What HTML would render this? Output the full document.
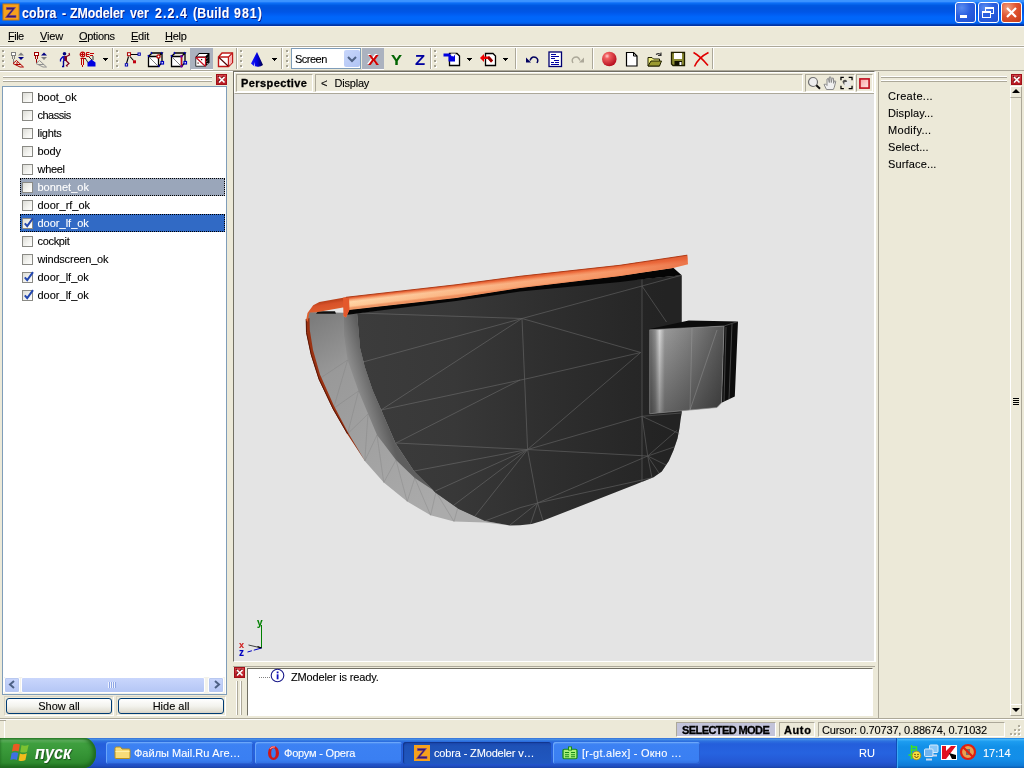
<!DOCTYPE html>
<html lang="ru"><head><meta charset="utf-8"><title>cobra - ZModeler ver 2.2.4 (Build 981)</title>
<style>
*{box-sizing:border-box}
html,body{margin:0;padding:0}
body{width:1024px;height:768px;overflow:hidden;position:relative;background:#ece9d8;font-family:"Liberation Sans","DejaVu Sans",sans-serif;font-size:11px;line-height:13px;color:#000;cursor:default;-webkit-text-stroke:.1px currentColor}
.a{position:absolute}
.t{position:absolute;white-space:nowrap}
svg{position:absolute;overflow:visible}
u{text-decoration:underline;text-underline-offset:1px}
#tb,#mb,#tool,#lp,#vp,#rp,#msg,#sb,#task{will-change:transform}
/* title bar */
#tb{left:0;top:0;width:1024px;height:26px;background:linear-gradient(to bottom,#3d95ff 0,#3a92ff 1.500px,#1c7afa 2.500px,#0a6cf2 3.500px,#0059e2 5.500px,#0054de 8px,#0056e6 12px,#005cf0 14px,#0066fa 17px,#0066f8 22px,#005ae4 23.500px,#0040b8 24.500px,#002e9a 26px)}
#tb .cap{position:absolute;left:0;top:5px;font:bold 14px/17px "Liberation Sans",sans-serif;color:#fff;text-shadow:1px 1px 0 #0a1883}
#tb .w{position:absolute;top:0;white-space:nowrap;transform-origin:0 0;transform:scaleX(.885)}
.cb{position:absolute;top:2px;width:21px;height:21px;border:1px solid #fff;border-radius:3px;background:radial-gradient(circle at 30% 25%,#5a8cf0 0%,#2a5fe0 45%,#1f4fd0 100%)}
.cb.x{background:radial-gradient(circle at 30% 25%,#f0a080 0%,#e0532f 45%,#c43a18 100%)}
/* menubar */
#mb{left:0;top:26px;width:1024px;height:20px;background:#ece9d8;border-top:1px solid #f6f6f4}
#mb .t{top:3px}
/* generic lines */
.hl{position:absolute;height:1px;background:#aca899}
.hd{position:absolute;height:1px;background:#716f64}
.wl{position:absolute;height:1px;background:#fff}
.ll{position:absolute;height:1px;background:#f8f7f1}
.vl{position:absolute;width:1px;background:#aca899}
.vd{position:absolute;width:1px;background:#716f64}
.vw{position:absolute;width:1px;background:#fff}
/* toolbar */
.grip{position:absolute;top:4px;width:3px;height:18px;background:linear-gradient(#a5a293,#a5a293) 0 0/2px 2px no-repeat,linear-gradient(#a5a293,#a5a293) 0 5px/2px 2px no-repeat,linear-gradient(#a5a293,#a5a293) 0 10px/2px 2px no-repeat,linear-gradient(#a5a293,#a5a293) 0 15px/2px 2px no-repeat,linear-gradient(#fff,#fff) 1px 1px/2px 2px no-repeat,linear-gradient(#fff,#fff) 1px 6px/2px 2px no-repeat,linear-gradient(#fff,#fff) 1px 11px/2px 2px no-repeat,linear-gradient(#fff,#fff) 1px 16px/2px 2px no-repeat}
.sep{position:absolute;top:2px;width:2px;height:21px;border-left:1px solid #aca899;border-right:1px solid #fff}
.dd{position:absolute;top:12px;width:5px;height:3px;background:linear-gradient(#000,#000) 0 0/5px 1px no-repeat,linear-gradient(#000,#000) 1px 1px/3px 1px no-repeat,linear-gradient(#000,#000) 2px 2px/1px 1px no-repeat}
.pressed{position:absolute;top:2px;height:22px;background:#abb2bf}
/* list */
.row{position:absolute;left:20px;width:205px;height:18px}
.row .cbx{position:absolute;left:2px;top:4px;width:11px;height:11px;border:1px solid #8a8a85;background:linear-gradient(135deg,#dcdcd7 0%,#f4f4f0 60%,#fff 100%)}
.row .lbl{position:absolute;left:17.500px;top:3px;white-space:nowrap}
.row.sel{background:#316ac5;color:#fff;outline:1px dotted #000;outline-offset:-1px}
.row.gsel{background:#9aa6ba;color:#fff;outline:1px dotted #000;outline-offset:-1px}
.close{position:absolute;width:11px;height:11px;background:linear-gradient(to bottom,#d8444c,#b81820);border:1px solid #a01018}
.btn{position:absolute;height:16px;border:1px solid #003c74;border-radius:3px;background:linear-gradient(to bottom,#fff 0%,#f3f3ee 50%,#e3e1d6 85%,#d6d0c5 100%);text-align:center;line-height:14px}
.sbtn{position:absolute;width:16px;height:16px;border:1px solid #fff;border-radius:2px;background:linear-gradient(to bottom,#c9d6fc,#b4c6f5);box-shadow:0 0 0 1px #b8c8f0 inset}
/* status */
.pane{position:absolute;top:3px;height:15px;border:1px solid;border-color:#aca899 #fff #fff #aca899;line-height:15px;white-space:nowrap;overflow:hidden}
/* taskbar */
#task{left:0;top:738px;width:1024px;height:30px;background:linear-gradient(to bottom,#3168d5 0%,#4993e6 4%,#2d71e0 10%,#245edb 20%,#2663e0 50%,#2458d4 80%,#1f4ec2 93%,#1941a5 100%)}
.tk{position:absolute;top:4px;height:22px;border-radius:3px;background:linear-gradient(to bottom,#5c9af6 0%,#3c81f3 12%,#3a7ff2 80%,#306de0 100%);color:#fff;box-shadow:inset 1px 1px 0 #6aa6fa,inset -1px -1px 0 #2a5fd0}
.tk.act{background:linear-gradient(to bottom,#1a46ad 0%,#1e52b7 20%,#2057c0 100%);box-shadow:inset 1px 1px 1px #12358c}
.tk .t{top:5px;color:#fff}
</style></head>
<body>
<!-- TITLE BAR -->
<div id="tb" class="a">
  <svg style="left:3px;top:4px" width="17" height="17" viewBox="0 0 17 17"><rect x="0" y="0" width="16" height="16" fill="#f6a11c"/><rect x="0" y="0" width="16" height="16" fill="none" stroke="#c87810" stroke-width="1"/><path d="M3.5 3.5h9l-6.5 8h7v2h-10.5l6.5-8h-5.5z" fill="#3a1a6a" stroke="#6a3a9a" stroke-width=".6"/></svg>
  <div class="cap"><span class="w" style="left:21.75px;letter-spacing:0.21px">cobra</span> <span class="w" style="left:62px;letter-spacing:0px">-</span> <span class="w" style="left:70px;letter-spacing:-0.09px">ZModeler</span> <span class="w" style="left:130px;letter-spacing:0.08px">ver</span> <span class="w" style="left:155px;letter-spacing:1.25px">2.2.4</span> <span class="w" style="left:192.5px;letter-spacing:0.26px">(Build</span> <span class="w" style="left:233.75px;letter-spacing:1.15px">981)</span></div>
  <div class="cb" style="left:955px"><div class="a" style="left:4px;top:12px;width:7px;height:3px;background:#fff"></div></div>
  <div class="cb" style="left:978px"><svg style="left:0;top:0" width="19" height="19"><rect x="6.5" y="4.5" width="8" height="6" fill="none" stroke="#fff"/><rect x="6" y="4" width="9" height="2" fill="#fff"/><rect x="3.5" y="8.5" width="8" height="6" fill="#2a5fe0" stroke="#fff"/><rect x="3" y="8" width="9" height="2" fill="#fff"/></svg></div>
  <div class="cb x" style="left:1001px"><svg style="left:0;top:0" width="19" height="19"><path d="M5 5l9 9M14 5l-9 9" stroke="#fff" stroke-width="2.2" fill="none"/></svg></div>
</div>
<!-- MENU BAR -->
<div id="mb" class="a">
  <div class="t" style="left:8px;letter-spacing:-.5px"><u>F</u>ile</div>
  <div class="t" style="left:40px;letter-spacing:-.15px"><u>V</u>iew</div>
  <div class="t" style="left:79px;letter-spacing:-.3px"><u>O</u>ptions</div>
  <div class="t" style="left:131px;letter-spacing:-.25px"><u>E</u>dit</div>
  <div class="t" style="left:165px;letter-spacing:-.25px"><u>H</u>elp</div>
</div>
<!-- TOOLBAR -->
<div class="ll" style="left:0;top:45px;width:1024px"></div>
<div class="hl" style="left:0;top:46px;width:1024px"></div>
<div class="wl" style="left:0;top:47px;width:1024px"></div>
<div id="tool" class="a" style="left:0;top:46px;width:1024px;height:26px">
  <div class="hl" style="left:0;top:24px;width:1024px"></div>
  <div class="wl" style="left:0;top:25px;width:233px"></div>
  <div class="grip" style="left:2px"></div>
  <!-- icon 1 : move tool -->
  <svg style="left:10px;top:5px" width="16" height="17" viewBox="0 0 16 17">
    <rect x="1.5" y="1.5" width="4" height="3" fill="#fff" stroke="#808080"/><path d="M2.5 5v3M4.5 5v3M3.5 8v4" stroke="#808080" fill="none"/>
    <path d="M3 12.5l3.5-3 7 6.5h-3.500zM5 13.500h6M7 11v3" stroke="#b00000" fill="none"/>
    <path d="M8 4.500h6l-3-3z" fill="#808080"/><path d="M8 6h6l-3 3z" fill="#000080"/>
  </svg>
  <!-- icon 2 -->
  <svg style="left:33px;top:5px" width="16" height="17" viewBox="0 0 16 17">
    <rect x="1.5" y="1.5" width="4" height="3" fill="#fff" stroke="#a00000"/><path d="M2.500 5v3M4.500 5v3M3.500 8v4" stroke="#a00000" fill="none"/>
    <path d="M3 12.500l3.500-3 7 6.500h-3.500zM5 13.500h6" stroke="#909090" fill="none"/>
    <path d="M8 4.500h6l-3-3z" fill="#000080"/><path d="M8 6h6l-3 3z" fill="#808080"/>
  </svg>
  <!-- icon 3 : walking man -->
  <svg style="left:59px;top:5px" width="13" height="17" viewBox="0 0 13 17">
    <circle cx="5.500" cy="2.800" r="1.800" fill="#000080"/>
    <path d="M4 5h3v5h-3z" fill="#1a1ac0"/><path d="M5.500 5h2.500v5h-2.500z" fill="#800020"/>
    <path d="M4 5.500l-2.500 3v2" stroke="#0000c0" stroke-width="1.300" fill="none"/>
    <path d="M7.500 5.500l3-1.500-.5-2" stroke="#800020" stroke-width="1.200" fill="none"/>
    <path d="M4.500 10v5.500h-1.500" stroke="#000090" stroke-width="1.400" fill="none"/>
    <path d="M7 9.500l3 3-2.500 2 1 1" stroke="#800020" stroke-width="1.200" fill="none"/>
  </svg>
  <!-- icon 4 -->
  <svg style="left:79px;top:5px" width="18" height="17" viewBox="0 0 18 17">
    <circle cx="3.500" cy="3.500" r="2.300" fill="none" stroke="#c00000" stroke-width="1.200"/><path d="M1.500 3.500h4M3.500 1.500v4" stroke="#c00000"/>
    <path d="M7.500 1.500v4M7.500 1.500h3M7.500 3.500h3M7.500 5.500h3M11 2.500h4M11 4.500h3" stroke="#c00000" fill="none"/>
    <path d="M1.500 7.500h5M2.500 8v6M4.500 8v6M3.500 14v2" stroke="#c00000" fill="none"/>
    <path d="M6 7l4 6M10 6l3 3M14 5v4" stroke="#000" fill="none" stroke-width=".8"/>
    <path d="M8.500 15.500v-4l4-3 4 3v4z" fill="#0000e0"/>
  </svg>
  <div class="dd" style="left:103px"></div>
  <div class="sep" style="left:112px"></div>
  <div class="grip" style="left:116px"></div>
  <!-- icon 5 : vertices -->
  <svg style="left:124px;top:5px" width="18" height="17" viewBox="0 0 18 17">
    <path d="M6 3.500h8M4.500 5.500l-2 7M6 5.500l3.500 4" stroke="#000" stroke-width="1.100" fill="none"/>
    <rect x="3.500" y="1.700" width="3" height="3" fill="#fff" stroke="#b01010" stroke-width="1.100"/>
    <rect x="14" y="2" width="2.300" height="2.300" fill="#fff" stroke="#0000b0" stroke-width="1"/>
    <rect x="1.300" y="12.700" width="2.300" height="2.300" fill="#fff" stroke="#0000b0" stroke-width="1"/>
    <rect x="9" y="9.300" width="3" height="3" fill="#c00010"/>
  </svg>
  <!-- icon 6 : cube edges -->
  <svg style="left:147px;top:5px" width="18" height="17" viewBox="0 0 18 17">
    <path d="M1.500 5.500h10v10h-10z" fill="#fff" stroke="#000" stroke-width="1.300"/>
    <path d="M1.500 5.500l3.500-3.500h10l-3.500 3.500M15 2v9.500l-3.500 4" fill="none" stroke="#000" stroke-width="1.300"/>
    <path d="M2.500 6.500l8 8" stroke="#606060" stroke-width=".8"/>
    <path d="M1 4l1 2M4 1l1 2M14 1l1.500 2M11 14l1.500 2" stroke="#0000c0" stroke-width="1.200"/>
    <circle cx="11.500" cy="5.500" r="1.600" fill="#fff" stroke="#c00000" stroke-width="1.300"/>
    <rect x="14" y="10.500" width="2.500" height="2.500" fill="#fff" stroke="#0000c0" stroke-width="1.200"/>
  </svg>
  <!-- icon 7 -->
  <svg style="left:170px;top:5px" width="18" height="17" viewBox="0 0 18 17">
    <path d="M1.500 5.500h10v10h-10z" fill="#fff" stroke="#000" stroke-width="1.300"/>
    <path d="M1.500 5.500l3.500-3.500h10l-3.500 3.500M15 2v9.500l-3.500 4" fill="none" stroke="#000" stroke-width="1.300"/>
    <path d="M2.500 6.500l8 8" stroke="#606060" stroke-width=".8"/>
    <path d="M1 4l1 2M4 1l1 2M14 1l1.500 2" stroke="#0000c0" stroke-width="1.200"/>
    <path d="M11.500 5.500v10" stroke="#c01020" stroke-width="1.500"/>
    <circle cx="11.500" cy="5.300" r="1.300" fill="#7000a0"/><circle cx="11.500" cy="15.300" r="1.200" fill="#7000a0"/>
    <rect x="14" y="10.500" width="2.500" height="2.500" fill="#fff" stroke="#0000c0" stroke-width="1.200"/>
  </svg>
  <!-- icon 8 pressed -->
  <div class="pressed" style="left:190px;width:23px"></div>
  <div class="wl" style="left:191px;top:23px;width:22px"></div>
  <svg style="left:194px;top:5px" width="17" height="17" viewBox="0 0 17 17">
    <path d="M1.500 6l3.500-4h10.500v9.500l-4 4h-10z" fill="#000"/>
    <path d="M5.300 3h8.500l-2.600 2.600h-8.300z" fill="#fff"/>
    <path d="M2.200 6.800h8.800v8h-8.800z" fill="#fff"/>
    <path d="M12.800 7.500l1.500-1.500M12.800 10.500l1.500-1.500M12.800 13l1.500-1.500" stroke="#fff" stroke-width="1" stroke-dasharray="1 1"/>
    <path d="M1.500 6.300h10v9.200M2 6.500l9 8.500" fill="none" stroke="#c01020" stroke-width="1.200"/>
    <rect x="7" y="8" width="1.200" height="1.200" fill="#400"/><rect x="3.500" y="11.500" width="1.200" height="1.200" fill="#400"/>
  </svg>
  <!-- icon 9 red cube -->
  <svg style="left:217px;top:5px" width="17" height="17" viewBox="0 0 17 17">
    <path d="M1.500 6l3.500-4h10.500v9.500l-4 4h-10z" fill="#fff" stroke="#c01818" stroke-width="1.400"/>
    <path d="M1.500 6h10v9.500M11.500 6l4-4" fill="none" stroke="#c01818" stroke-width="1.400"/>
    <path d="M12.500 6.500l2.500-3v8l-2.500 3z" fill="#f8b0b0"/>
    <path d="M2 6.500l9 8.500" stroke="#500" stroke-width="1.100"/>
  </svg>
  <div class="sep" style="left:236px"></div>
  <div class="grip" style="left:240px"></div>
  <!-- cone -->
  <svg style="left:250px;top:5px" width="14" height="17" viewBox="0 0 14 17">
    <defs><linearGradient id="cg" x1="0" x2="1"><stop offset="0" stop-color="#1a1aff"/><stop offset=".5" stop-color="#0000e0"/><stop offset="1" stop-color="#000040"/></linearGradient></defs>
    <path d="M7 1l6 13q-3 2.500-6.500 1.500q-3.500-.5-5.500-3z" fill="url(#cg)"/>
    <path d="M5 11l0 4.200-1-.4z" fill="#d8d8ff"/>
  </svg>
  <div class="dd" style="left:272px"></div>
  <div class="sep" style="left:281px"></div>
  <div class="grip" style="left:286px"></div>
  <!-- combo -->
  <div class="a" style="left:291px;top:2px;width:70px;height:21px;border:1px solid #7f9db9;background:#fff">
    <div class="t" style="left:3px;top:4px;letter-spacing:-.5px">Screen</div>
    <div class="a" style="left:52px;top:1px;width:16px;height:17px;border-radius:2px;background:linear-gradient(135deg,#c8d6fb,#b0c4f4);"></div>
    <svg style="left:55px;top:7px" width="10" height="7"><path d="M1 1l4 4 4-4" fill="none" stroke="#4d6185" stroke-width="2"/></svg>
  </div>
  <div class="pressed" style="left:362px;width:22px"></div>
  <div class="wl" style="left:362px;top:23px;width:22px"></div>
  <div class="t" style="left:368px;top:6px;font:bold 15px/16px 'Liberation Sans',sans-serif;color:#d00000;text-shadow:-1px -1px 0 #fff;transform-origin:0 0;transform:scaleX(1.1)">X</div>
  <div class="t" style="left:391px;top:6px;font:bold 15px/16px 'Liberation Sans',sans-serif;color:#006400;transform-origin:0 0;transform:scaleX(1.1)">Y</div>
  <div class="t" style="left:414.500px;top:6px;font:bold 15px/16px 'Liberation Sans',sans-serif;color:#0000a0;transform-origin:0 0;transform:scaleX(1.1)">Z</div>
  <div class="sep" style="left:430px"></div>
  <div class="grip" style="left:434px"></div>
  <!-- import icon -->
  <svg style="left:443px;top:6px" width="18" height="15" viewBox="0 0 18 15">
    <path d="M6.500 1.500h7.500l2.500 2.500v9.500h-10z" fill="#fff" stroke="#000" stroke-width="1.300"/>
    <path d="M0.500 1.500h6l2.500 3 3-3v8h-6.500v-5h-5z" fill="#0000e0"/>
    <path d="M7.500 1.500h5.500l-2.700 3.200z" fill="#fff"/>
  </svg>
  <div class="dd" style="left:467px"></div>
  <!-- export icon -->
  <svg style="left:479px;top:6px" width="18" height="15" viewBox="0 0 18 15">
    <path d="M6.500 1.500h7.500l2.500 2.500v9.500h-10z" fill="#fff" stroke="#000" stroke-width="1.300"/>
    <path d="M1 6l4-4v2.500h5.500l3.500 4-2 2-3-3.500h-4v3z" fill="#f00000"/>
    <path d="M9 4.500h1.500l3.500 4-2 2-3-3.500z" fill="#900000"/>
  </svg>
  <div class="dd" style="left:503px"></div>
  <div class="sep" style="left:515px"></div>
  <!-- undo -->
  <svg style="left:525px;top:8px" width="15" height="11" viewBox="0 0 15 11">
    <path d="M5 6.500q2-5 6-3q3 2 1 5.500" fill="none" stroke="#000060" stroke-width="1.500"/>
    <path d="M1 3.500l5 5h-5z" fill="#000060"/>
  </svg>
  <!-- list doc -->
  <svg style="left:548px;top:5px" width="15" height="17" viewBox="0 0 15 17">
    <rect x="1" y="1" width="12.500" height="14.500" fill="#fff" stroke="#000070" stroke-width="1.300"/>
    <path d="M3 3.500h5M3 5.500h8M3 7.500h4M6 9.500h5M3 11.500h3M7 11.500h4M3 13.500h8" stroke="#0000a0" stroke-width="1"/>
  </svg>
  <!-- redo (disabled) -->
  <svg style="left:570px;top:8px" width="15" height="11" viewBox="0 0 15 11">
    <path d="M10 6.500q-2-5-6-3q-3 2-1 5.500" fill="none" stroke="#aca899" stroke-width="1.400"/>
    <path d="M14 3.500l-5 5h5z" fill="#aca899"/>
  </svg>
  <div class="sep" style="left:592px"></div>
  <!-- red ball -->
  <svg style="left:601px;top:5px" width="17" height="17" viewBox="0 0 17 17">
    <defs><radialGradient id="rb" cx=".35" cy=".3" r=".7"><stop offset="0" stop-color="#ffd0d0"/><stop offset=".25" stop-color="#f06060"/><stop offset="1" stop-color="#b81020"/></radialGradient></defs>
    <circle cx="8.300" cy="8" r="7.300" fill="url(#rb)"/>
  </svg>
  <!-- new doc -->
  <svg style="left:625px;top:5px" width="13" height="17" viewBox="0 0 13 17">
    <path d="M1.500 1.500h7l3.500 3.500v10h-10.500z" fill="#fff" stroke="#000" stroke-width="1.200"/><path d="M8.500 1.500v3.500h3.500" fill="none" stroke="#000" stroke-width="1"/>
  </svg>
  <!-- open -->
  <svg style="left:647px;top:5px" width="16" height="17" viewBox="0 0 16 17">
    <path d="M1 6.500h4l1.500 1.500h6v7h-11.500z" fill="#f0f080" stroke="#202000" stroke-width="1"/>
    <path d="M1 15l3-5h10.500l-2 5z" fill="#9a9a30" stroke="#202000" stroke-width="1"/>
    <path d="M9 3.500q3-2 5 .5M14 1.500v3h-3" fill="none" stroke="#303030" stroke-width="1.100"/>
  </svg>
  <!-- save -->
  <svg style="left:670px;top:5px" width="16" height="17" viewBox="0 0 16 17">
    <path d="M1.500 1.500h13v13h-11.500l-1.500-1.500z" fill="#8a8a30" stroke="#202000" stroke-width="1.300"/>
    <rect x="4" y="2" width="8" height="6" fill="#fff"/><rect x="4.500" y="10" width="7.500" height="4.500" fill="#101000"/><rect x="9.500" y="11" width="2" height="3" fill="#fff"/>
  </svg>
  <!-- delete -->
  <svg style="left:692px;top:5px" width="18" height="17" viewBox="0 0 18 17">
    <path d="M1.500 1.500q6 3 14.500 13M16.500 1.500q-10 5-14 14" fill="none" stroke="#e00000" stroke-width="1.600"/>
  </svg>
  <div class="sep" style="left:712px"></div>
</div>
<!-- LEFT PANEL -->
<div id="lp" class="a" style="left:0;top:72px;width:233px;height:646px">
  <div class="wl" style="left:3px;top:4px;width:209px"></div><div class="hl" style="left:3px;top:5px;width:209px"></div>
  <div class="wl" style="left:3px;top:8px;width:209px"></div><div class="hl" style="left:3px;top:9px;width:209px"></div>
  <div class="close" style="left:216px;top:2px"><svg style="left:0;top:0" width="9" height="9"><path d="M1 1l6 6M7 1l-6 6" stroke="#400" stroke-width="1.600" fill="none" opacity=".7"/><path d="M2 2l5.500 5.500M7.500 2l-5.500 5.500" stroke="#fff" stroke-width="1.700" fill="none"/></svg></div>
  <div id="list" class="a" style="left:2px;top:14px;width:225px;height:609px;border:1px solid #7f9db9;background:#fff">
    <div class="row " style="left:17px;top:1px"><div class="cbx"></div><div class="lbl">boot_ok</div></div>
    <div class="row " style="left:17px;top:19px"><div class="cbx"></div><div class="lbl" style="letter-spacing:-0.5px">chassis</div></div>
    <div class="row " style="left:17px;top:37px"><div class="cbx"></div><div class="lbl" style="letter-spacing:-0.27px">lights</div></div>
    <div class="row " style="left:17px;top:55px"><div class="cbx"></div><div class="lbl" style="letter-spacing:-0.15px">body</div></div>
    <div class="row " style="left:17px;top:73px"><div class="cbx"></div><div class="lbl" style="letter-spacing:-0.3px">wheel</div></div>
    <div class="row gsel" style="left:17px;top:91px"><div class="cbx"></div><div class="lbl">bonnet_ok</div></div>
    <div class="row " style="left:17px;top:109px"><div class="cbx"></div><div class="lbl">door_rf_ok</div></div>
    <div class="row sel" style="left:17px;top:127px"><div class="cbx"><svg style="left:0;top:-2px" width="12" height="12"><path d="M1.800 6.300l2.400 2.900 5.800-8" fill="none" stroke="#2448b0" stroke-width="2"/></svg></div><div class="lbl">door_lf_ok</div></div>
    <div class="row " style="left:17px;top:145px"><div class="cbx"></div><div class="lbl" style="letter-spacing:-0.33px">cockpit</div></div>
    <div class="row " style="left:17px;top:163px"><div class="cbx"></div><div class="lbl" style="letter-spacing:-0.2px">windscreen_ok</div></div>
    <div class="row " style="left:17px;top:181px"><div class="cbx"><svg style="left:0;top:-2px" width="12" height="12"><path d="M1.800 6.300l2.400 2.900 5.800-8" fill="none" stroke="#2448b0" stroke-width="2"/></svg></div><div class="lbl">door_lf_ok</div></div>
    <div class="row " style="left:17px;top:199px"><div class="cbx"><svg style="left:0;top:-2px" width="12" height="12"><path d="M1.800 6.300l2.400 2.900 5.800-8" fill="none" stroke="#2448b0" stroke-width="2"/></svg></div><div class="lbl">door_lf_ok</div></div>
    <div class="a" style="left:1px;top:590px;width:221px;height:17px;background:#f3f2ea"></div>
    <div class="sbtn" style="left:1px;top:590px"><svg style="left:3px;top:2px" width="8" height="9"><path d="M6 1l-4 3.500 4 3.500" fill="none" stroke="#4d6185" stroke-width="2"/></svg></div>
    <div class="a" style="left:18px;top:590px;width:184px;height:16px;border:1px solid #fff;border-radius:2px;background:linear-gradient(to bottom,#c9d6fc,#b4c6f5)"><div class="a" style="left:86px;top:4px;width:8px;height:6px;background:repeating-linear-gradient(to right,#eef3fe 0,#eef3fe 1px,#8ea6e6 1px,#8ea6e6 2px)"></div></div>
    <div class="sbtn" style="left:205px;top:590px"><svg style="left:4px;top:2px" width="8" height="9"><path d="M2 1l4 3.500-4 3.500" fill="none" stroke="#4d6185" stroke-width="2"/></svg></div>
  </div>
  <div class="a" style="left:4px;top:624px;width:110px;height:20px;border:1px solid;border-color:#d8d4c4 #fff #fff #d8d4c4"></div>
  <div class="a" style="left:116px;top:624px;width:110px;height:20px;border:1px solid;border-color:#d8d4c4 #fff #fff #d8d4c4"></div>
  <div class="btn" style="left:6px;top:626px;width:106px">Show all</div>
  <div class="btn" style="left:118px;top:626px;width:106px">Hide all</div>
</div>
<!-- VIEWPORT -->
<div id="vp" class="a" style="left:233px;top:71px;width:642px;height:591px;border:1px solid;border-color:#716f64 #fff #fff #716f64;background:#e4e4e4">
  <div class="a" style="left:0;top:0;width:640px;height:22px;background:#ece9d8;border-bottom:1px solid #aca899;border-top:1px solid #fff;border-left:1px solid #fff"></div>
  <div class="wl" style="left:1px;top:20px;width:639px"></div>
  <!-- Perspective button -->
  <div class="a" style="left:2px;top:2px;width:77px;height:18px;border:1px solid;border-color:#aca899 #fff #fff #aca899"><div class="t" style="left:4px;top:2px;font-weight:bold;-webkit-text-stroke:.3px #000;letter-spacing:.42px">Perspective</div></div>
  <div class="a" style="left:81px;top:2px;width:488px;height:18px;border:1px solid;border-color:#aca899 #fff #fff #aca899"><div class="t" style="left:5px;top:2px">&lt;</div><div class="t" style="left:18.500px;top:2px;letter-spacing:-.2px">Display</div></div>
  <div class="a" style="left:571px;top:2px;width:50px;height:18px;border:1px solid;border-color:#aca899 #fff #fff #aca899">
    <!-- zoom -->
    <svg style="left:1px;top:1px" width="15" height="15" viewBox="0 0 15 15"><circle cx="6" cy="6" r="4.500" fill="#eeeeee" stroke="#707070" stroke-width="1.200"/><path d="M9.300 9.300l3.700 3.500" stroke="#101010" stroke-width="2"/></svg>
    <!-- hand -->
    <svg style="left:17px;top:1px" width="15" height="15" viewBox="0 0 15 15"><path d="M3.500 13.500l-2.500-5 1.500-.5 1.500 1.500v-6.500l1.500-.5.800 4v-5.500h1.500l.5 5.500.8-4.500 1.400.3v5l1-2.500 1.300.5-1.500 6-1 2.200z" fill="#f0f0f0" stroke="#8a8a8a" stroke-width="1"/></svg>
    <!-- region -->
    <svg style="left:33.500px;top:1px" width="13.500" height="14.500" viewBox="0 0 14 15"><path d="M1 4.500v-3h3M9 1.500h3.500v3M12.500 10v3h-3.500M4 13h-3v-3" fill="none" stroke="#000" stroke-width="1.300"/><circle cx="7.500" cy="8" r="3.500" fill="#e8e8e8"/><path d="M2.500 6q1-3 4-2l1 2-3 .5v3z" fill="#505050"/></svg>
  </div>
  <div class="a" style="left:622px;top:2px;width:17px;height:18px;border:1px solid;border-color:#aca899 #fff #fff #aca899">
    <svg style="left:2px;top:3px" width="11" height="11" viewBox="0 0 12 12"><defs><linearGradient id="rs" x1="0" y1="0" x2="1" y2="1"><stop offset="0" stop-color="#f8a0a0"/><stop offset="1" stop-color="#ffe8e8"/></linearGradient></defs><rect x="1" y="1" width="10" height="10" fill="url(#rs)" stroke="#c01020" stroke-width="1.800"/></svg>
  </div>
  <!-- MODEL -->
  <svg style="left:-234px;top:-72px" width="1024" height="768" viewBox="0 0 1024 768">
    <defs>
      <linearGradient id="mPanel" x1="357" y1="0" x2="682" y2="0" gradientUnits="userSpaceOnUse"><stop offset="0" stop-color="#3c3c3c"/><stop offset=".3" stop-color="#383838"/><stop offset=".6" stop-color="#2e2e2e"/><stop offset=".85" stop-color="#272727"/><stop offset="1" stop-color="#242424"/></linearGradient>
      <linearGradient id="mRim" x1="310" y1="320" x2="430" y2="515" gradientUnits="userSpaceOnUse"><stop offset="0" stop-color="#7c7c7c"/><stop offset=".25" stop-color="#999999"/><stop offset="1" stop-color="#ababab"/></linearGradient>
      <linearGradient id="mBand" x1="345" y1="380" x2="372" y2="372" gradientUnits="userSpaceOnUse"><stop offset="0" stop-color="#a2a2a2"/><stop offset="1" stop-color="#5e5e5e"/></linearGradient>
      <linearGradient id="mOr" x1="520" y1="276" x2="521.400" y2="288" gradientUnits="userSpaceOnUse"><stop offset="0" stop-color="#c6461c"/><stop offset=".2" stop-color="#ea6a3c"/><stop offset=".34" stop-color="#f8a878"/><stop offset=".5" stop-color="#ffd6a8"/><stop offset=".85" stop-color="#ffca98"/><stop offset="1" stop-color="#f09a68"/></linearGradient><linearGradient id="mOrX" x1="346" y1="0" x2="688" y2="0" gradientUnits="userSpaceOnUse"><stop offset="0" stop-color="#ee6c3c" stop-opacity="0"/><stop offset=".35" stop-color="#ee6c3c" stop-opacity=".25"/><stop offset=".8" stop-color="#ee6c3c" stop-opacity=".6"/><stop offset="1" stop-color="#e8643a" stop-opacity=".85"/></linearGradient>
      <linearGradient id="mOr2" x1="325" y1="300" x2="327" y2="312" gradientUnits="userSpaceOnUse"><stop offset="0" stop-color="#b03a14"/><stop offset=".4" stop-color="#d8522a"/><stop offset="1" stop-color="#e0602e"/></linearGradient>
      <linearGradient id="mH" x1="650" y1="0" x2="724" y2="0" gradientUnits="userSpaceOnUse"><stop offset="0" stop-color="#6a6a6a"/><stop offset=".07" stop-color="#8e8e8e"/><stop offset=".13" stop-color="#d8d8d8"/><stop offset=".2" stop-color="#9a9a9a"/><stop offset=".5" stop-color="#848484"/><stop offset="1" stop-color="#565656"/></linearGradient>
      <linearGradient id="mHs" x1="0" y1="327" x2="0" y2="412" gradientUnits="userSpaceOnUse"><stop offset="0" stop-color="#000" stop-opacity="0"/><stop offset="1" stop-color="#000" stop-opacity=".35"/></linearGradient>
    </defs>
    <!-- outer rim (light grey) -->
    <path d="M307 318L309 312L357 313L357.700 321.500L360 348L364.750 367L372.500 390L381.400 410.500L395.500 443.300L414.200 471.400L435.300 492.500L458.750 508.900L485 521L510 525.500L485 522.500L454 521.500L430.600 515.300L407.200 501.500L383.750 482.500L364.750 461L347.600 433.800L333.500 408.400L319.400 378.750L311.600 354.400L307 332.500Z" fill="url(#mRim)"/>
    <!-- inner darker band -->
    <path d="M344 314L357 313L357.700 321.500L360 348L364.750 367L372.500 390L381.400 410.500L395.500 443.300L414.200 471.400L435.300 492.500L458.750 508.900L485 521L454 504L436 492L414.750 478L396 460L377 435L358.500 391L347.600 360L344 335Z" fill="url(#mBand)"/>
    <path d="M319.4 378.75L347.6 360L333.5 408.4M333.5 408.4L358.5 391L347.6 433.8M347.6 433.8L368 414L364.75 461M364.75 461L377 435L383.75 482.5M383.75 482.5L396 460L407.2 501.5M407.2 501.5L414.75 478L430.6 515.3M430.6 515.3L436 492L454 521.5M454 521.5L458 507" fill="none" stroke="#7a7a7a" stroke-width=".7" opacity=".45"/>
    <!-- dark red outer edge -->
    <path d="M306 319L309.500 318L309.800 330L313 350L320 374.500L333.800 405.500L348 432.500L365 461L347.600 434.600L333 409.500L318.800 379.500L311 355L306.300 333Z" fill="#9a3212"/>
    <path d="M306.200 319L306.500 332.500L311.200 354.600L319 379L333.100 408.700L347.600 434" fill="none" stroke="#5a1404" stroke-width="1"/>
    <!-- main dark panel -->
    <path d="M357 313L456 299.500L520 290L620 279.500L642 279L681.700 275.200L681.700 412.800L680.500 420L679.500 428L677.500 438.600L673.500 450.300L668.800 460.900L661.800 471.400L653.600 477.300L543.400 520.600L531.700 524.100L520 525.300L510 525.500L485 521L458.750 508.900L435.300 492.500L414.200 471.400L395.500 443.300L381.400 410.500L372.500 390L364.750 367L360 348L357.700 321.500Z" fill="url(#mPanel)"/>
    <!-- right section of panel slightly darker -->
    <path d="M642 279L681.700 275.200L681.700 412.800L680.500 420L679.500 428L677.500 438.600L673.500 450.300L668.800 460.900L661.800 471.400L653.600 477.300L642 482Z" fill="#222" opacity=".3"/>
    <!-- wireframe -->
    <g fill="none" stroke="#9a9a9a" stroke-width=".8" opacity=".4">
      <path d="M357 313L522 318.500L642 286"/>
      <path d="M522 318.500L363 362M522 318.500L381 410M522 318.500L527.600 449.500M522 318.500L640.700 352.500"/>
      <path d="M381 410L530 378L640.700 352.500M396 443L520 380M640.700 352.500L527.600 449.500"/>
      <path d="M642 279L642 482M642 286L681.700 275.200M642 286L666.500 322"/>
      <path d="M527.600 449.500L396 443M527.600 449.500L414.200 471M527.600 449.500L435.300 491M527.600 449.500L454 505M527.600 449.500L475 516"/>
      <path d="M527.600 449.500L642 416.300M527.600 449.500L647.700 456M527.600 449.500L537.600 503"/>
      <path d="M537.600 503L647.700 456M537.600 503L651 478M537.600 503L520 507.700L485 521M537.600 503L530.500 524M537.600 503L543 520.600M537.600 503L510 525"/>
      <path d="M647.700 456L677 430.400M647.700 456L674.700 446.800M647.700 456L666 465M647.700 456L659 473M647.700 456L652 478M642 416.300L647.700 456M642 416.300L680 434M642 416.300L681 413"/>
    </g>
    <!-- black shadow under strip + top face -->
    <path d="M346 315L349 309.500L456 297.500L520 287.500L620 275.500L673 267.500L681.700 275.200L642 279.300L620 282L520 291.500L456 301L357 313.500Z" fill="#050505"/>
    <path d="M318 311.200L335 311.200L336 313.800L316 313.800Z" fill="#101010"/>
    <!-- orange strip -->
    <path d="M346 297.300L456 284.800L520 276.300L620 265.300L687.200 255.200L688 264.200L673 268L620 276L520 288L456 298L349 310L346 317.500L343.500 316Z" fill="url(#mOr)"/>
    <path d="M346 297.300L456 284.800L520 276.300L620 265.300L687.200 255.200L688 264.200L673 268L620 276L520 288L456 298L349 310L346 317.500L343.500 316Z" fill="url(#mOrX)"/>
    <path d="M306.200 320L307.500 313L313.200 305.200L319.400 302L346 297.300L346.500 308L343 307.500L316.300 312.200L309.500 312.500L307.500 322Z" fill="url(#mOr2)"/>
    <path d="M343 297.800L349 297L349.500 310L346 317.500L343.500 316Z" fill="#e4582c"/>
    <path d="M346 297.300L456 284.800L520 276.300L620 265.300L687.200 255.200" fill="none" stroke="#b03c18" stroke-width="1"/>
    <!-- handle -->
    <path d="M649.700 329L688.750 320.500L738 321.500L734.800 396.500L721.500 402.800L724 326L650 330.500Z" fill="#0c0c0c"/>
    <path d="M649.700 329.800L724 326L721.500 402.800L716.900 407.500L649.700 413.750Z" fill="url(#mH)"/>
    <path d="M649.700 329.800L724 326L721.500 402.800L716.900 407.500L649.700 413.750Z" fill="url(#mHs)"/>
    <path d="M649.700 329.800L724 326L721.500 402.800L716.900 407.500L649.700 413.750Z" fill="none" stroke="#8c8c8c" stroke-width=".8" opacity=".8"/>
    <g fill="none" stroke="#a8a8a8" stroke-width=".7" opacity=".5">
      <path d="M692 328L690 410M717 330L690 410M724 326L738 321.500M726 327L724 401M732 324L729 399"/>
    </g>
</svg>

  <!-- axes -->
  <svg style="left:5px;top:547px" width="30" height="40" viewBox="0 0 30 40">
    <path d="M22.500 6v23" stroke="#008000" stroke-width="1"/>
    <path d="M22.500 29l-13-3" stroke="#404040" stroke-width="1"/>
    <path d="M22.500 29l-14 4" stroke="#0000c0" stroke-width="1" stroke-dasharray="8 2"/>
    <path d="M22.500 29l-4-1.500" stroke="#000" stroke-width="1.200"/>
  </svg>
  <div class="t" style="left:23px;top:546px;font:bold 10px/10px 'Liberation Sans',sans-serif;color:#008000">y</div>
  <div class="t" style="left:5px;top:568px;font:bold 9px/10px 'Liberation Sans',sans-serif;color:#d02020">x</div>
  <div class="t" style="left:5px;top:576px;font:bold 10px/10px 'Liberation Sans',sans-serif;color:#0000c0">z</div>
</div>
<!-- RIGHT PANEL -->
<div class="vw" style="left:875px;top:72px;height:590px"></div>
<div class="vl" style="left:878px;top:72px;height:646px"></div>
<div id="rp" class="a" style="left:879px;top:72px;width:145px;height:646px">
  <div class="wl" style="left:2px;top:4px;width:126px"></div><div class="hl" style="left:2px;top:5px;width:126px"></div>
  <div class="wl" style="left:2px;top:8px;width:126px"></div><div class="hl" style="left:2px;top:9px;width:126px"></div>
  <div class="close" style="left:132px;top:2px"><svg style="left:0;top:0" width="9" height="9"><path d="M1 1l6 6M7 1l-6 6" stroke="#400" stroke-width="1.600" fill="none" opacity=".7"/><path d="M2 2l5.500 5.500M7.500 2l-5.500 5.500" stroke="#fff" stroke-width="1.700" fill="none"/></svg></div>
  <div class="t" style="left:9px;top:18px;letter-spacing:.3px">Create...</div>
  <div class="t" style="left:9px;top:35px;letter-spacing:.1px">Display...</div>
  <div class="t" style="left:9px;top:52px;letter-spacing:.3px">Modify...</div>
  <div class="t" style="left:9px;top:69px;letter-spacing:.1px">Select...</div>
  <div class="t" style="left:9px;top:86px;letter-spacing:.15px">Surface...</div>
  <!-- scroll -->
  <div class="vw" style="left:131px;top:15px;height:629px"></div>
  <div class="vl" style="left:142px;top:15px;height:629px"></div>
  <div class="a" style="left:131px;top:14px;width:12px;height:12px;border:1px solid;border-color:#fff #aca899 #aca899 #fff"><div class="a" style="left:1px;top:2px;width:0;height:0;border-left:4px solid transparent;border-right:4px solid transparent;border-bottom:4px solid #000"></div></div>
  <div class="a" style="left:131px;top:632px;width:12px;height:12px;border:1px solid;border-color:#fff #aca899 #aca899 #fff"><div class="a" style="left:1px;top:3px;width:0;height:0;border-left:4px solid transparent;border-right:4px solid transparent;border-top:4px solid #000"></div></div>
  <div class="a" style="left:134px;top:326px;width:6px;height:1px;background:#000;box-shadow:0 2px 0 #000,0 4px 0 #000,0 6px 0 #000"></div>
</div>
<!-- MESSAGE -->
<div id="msg" class="a" style="left:233px;top:663px;width:642px;height:55px">
  <div class="hl" style="left:0;top:3px;width:642px"></div>
  <div class="close" style="left:1px;top:4px"><svg style="left:0;top:0" width="9" height="9"><path d="M1 1l6 6M7 1l-6 6" stroke="#400" stroke-width="1.600" fill="none" opacity=".7"/><path d="M2 2l5.500 5.500M7.500 2l-5.500 5.500" stroke="#fff" stroke-width="1.700" fill="none"/></svg></div>
  <div class="vw" style="left:3px;top:18px;height:34px"></div><div class="vl" style="left:4px;top:18px;height:34px"></div>
  <div class="vw" style="left:7px;top:18px;height:34px"></div><div class="vl" style="left:8px;top:18px;height:34px"></div>
  <div class="a" style="left:14px;top:5px;width:626px;height:48px;background:#fff;border:1px solid;border-color:#716f64 #fff #fff #716f64"></div>
  <div class="a" style="left:26px;top:14px;width:11px;height:1px;background:repeating-linear-gradient(to right,#808080 0,#808080 1px,transparent 1px,transparent 2px)"></div>
  <svg style="left:37px;top:5px" width="16" height="16" viewBox="0 0 16 16"><circle cx="7.500" cy="7.500" r="6.300" fill="#fff" stroke="#1a1a8a" stroke-width="1.100"/><rect x="6.700" y="3.500" width="1.800" height="1.800" fill="#1010c0"/><rect x="6.700" y="6.300" width="1.800" height="5" fill="#1010c0"/></svg>
  <div class="t" style="left:58px;top:7.500px;letter-spacing:-.15px">ZModeler is ready.</div>
</div>
<!-- STATUS BAR -->
<div id="sb" class="a" style="left:0;top:718px;width:1024px;height:20px">
  <div class="hl" style="left:0;top:0;width:1024px"></div>
  <div class="wl" style="left:0;top:1px;width:1024px"></div>
  <div class="a" style="left:0;top:2px;width:6px;height:1px;background:#aca899"></div><div class="vw" style="left:4px;top:3px;height:17px"></div>
  <div class="pane" style="left:676px;width:100px;background:#c3c4da;font-weight:bold;-webkit-text-stroke:.3px #000;padding-left:5px;top:4px;letter-spacing:-.58px">SELECTED MODE</div>
  <div class="pane" style="left:779px;width:36px;font-weight:bold;-webkit-text-stroke:.3px #000;padding-left:4px;top:4px;letter-spacing:.6px">Auto</div>
  <div class="pane" style="left:818px;width:187px;padding-left:3px;top:4px;letter-spacing:-.17px">Cursor: 0.70737, 0.88674, 0.71032</div>
  <svg style="left:1009px;top:6px" width="13" height="13" viewBox="0 0 13 13"><g fill="#fff"><rect x="10" y="2" width="2" height="2"/><rect x="6" y="6" width="2" height="2"/><rect x="10" y="6" width="2" height="2"/><rect x="2" y="10" width="2" height="2"/><rect x="6" y="10" width="2" height="2"/><rect x="10" y="10" width="2" height="2"/></g><g fill="#b0ac9c"><rect x="9" y="1" width="2" height="2"/><rect x="5" y="5" width="2" height="2"/><rect x="9" y="5" width="2" height="2"/><rect x="1" y="9" width="2" height="2"/><rect x="5" y="9" width="2" height="2"/><rect x="9" y="9" width="2" height="2"/></g></svg>
</div>
<!-- TASKBAR -->
<div id="task" class="a">
  <div class="a" id="start" style="left:0;top:0;width:96px;height:30px;border-radius:0 12px 12px 0/0 15px 15px 0;background:linear-gradient(to bottom,#2f8a2f 0%,#5fb05f 8%,#3f9f3f 18%,#379637 50%,#2f8b2f 80%,#267a26 100%);box-shadow:inset -3px 0 4px #1f6a1f,inset 0 -2px 3px #1f6a1f">
    <svg style="left:10px;top:5px" width="22" height="19" viewBox="0 0 20 18" preserveAspectRatio="none">
      <path d="M3 1.500q3-1.500 6 0l-1.200 6.500q-3-1.300-6 0z" fill="#ea5a22"/>
      <path d="M10.500 2q3 1.300 6.500-.3l-1.500 6.500q-3 1.500-6.200.3z" fill="#7cc232"/>
      <path d="M1.500 9.500q3-1.300 6 0l-1.200 6.500q-3-1.300-6 0z" fill="#3f70e2"/>
      <path d="M9 10q3 1.300 6.300-.3l-1.300 6.500q-3 1.500-6.200.3z" fill="#f2bc1c"/>
    </svg>
    <div class="t" style="left:35px;top:5px;font:italic bold 18px/20px 'Liberation Sans',sans-serif;color:#fff;text-shadow:1px 1px 1px #1a4a1a;transform-origin:0 0;transform:scaleX(.9)">пуск</div>
  </div>
  <div class="tk" style="left:106px;width:147px">
    <svg style="left:8px;top:3px" width="17" height="16" viewBox="0 0 17 16"><path d="M1 3.500q0-1.500 1.500-1.500h4l1.500 2h7q1 0 1 1v7.500q0 1-1 1h-13q-1 0-1-1z" fill="#f8dc78" stroke="#b8901c" stroke-width="1"/><path d="M1.500 6.500h14" stroke="#fff0a8" stroke-width="1"/></svg>
    <div class="t" style="left:28px">Файлы Mail.Ru Аге…</div>
  </div>
  <div class="tk" style="left:255px;width:147px">
    <svg style="left:10px;top:3px" width="16" height="16" viewBox="0 0 16 16"><ellipse cx="8.500" cy="8" rx="5.500" ry="7" fill="#d01818"/><ellipse cx="8.500" cy="8" rx="2.300" ry="4.800" fill="#3a7ff2"/><path d="M5 4q2-2.500 5-2" stroke="#ff9090" stroke-width="1.200" fill="none"/></svg>
    <div class="t" style="left:29px;letter-spacing:-.2px">Форум - Opera</div>
  </div>
  <div class="tk act" style="left:403px;width:148px">
    <svg style="left:11px;top:3px" width="16" height="16" viewBox="0 0 16 16"><rect x="0" y="0" width="16" height="16" fill="#f6a11c"/><path d="M3.500 3.500h9l-6.500 8h7v2h-10.500l6.500-8h-5.500z" fill="#3a1a6a" stroke="#6a3a9a" stroke-width=".6"/></svg>
    <div class="t" style="left:31px;letter-spacing:-.15px">cobra - ZModeler v…</div>
  </div>
  <div class="tk" style="left:553px;width:147px">
    <svg style="left:9px;top:4px" width="16" height="14" viewBox="0 0 16 17" preserveAspectRatio="none"><rect x="1" y="4" width="14" height="11.500" rx="1.500" fill="#a8f078" stroke="#188a18" stroke-width="1.300"/><rect x="6.500" y="1" width="3" height="4" fill="#a8f078" stroke="#188a18"/><path d="M3 8h4M9 8h4M3 10.500h4M9 10.500h4M3 13h4M9 13h4" stroke="#188a18" stroke-width="1.200"/></svg>
    <div class="t" style="left:29px;letter-spacing:.24px">[r-gt.alex] - Окно …</div>
  </div>
  <div class="t" style="left:859px;top:9px;color:#fff">RU</div>
  <div class="a" id="tray" style="left:896px;top:0;width:128px;height:30px;background:linear-gradient(to bottom,#1a7ae0 0%,#3fb4f8 5%,#1c9cf0 12%,#1290e8 30%,#138ee9 70%,#0f7ad6 92%,#0a5cb0 100%);border-left:1px solid #0f4fb8;box-shadow:inset 1px 0 0 #3aa8f4">
    <svg style="left:9px;top:6px" width="18" height="18" viewBox="0 0 18 18"><path d="M5.500 1v14M5.500 3h5v3h-5M2.500 11h3" stroke="#40e020" stroke-width="1.500" fill="none"/><circle cx="10.500" cy="11.500" r="4.300" fill="#f8e040" stroke="#b08a10" stroke-width=".8"/><path d="M8.500 12.500q2 2 4 0" stroke="#604000" fill="none"/><circle cx="9" cy="10.500" r=".7" fill="#402000"/><circle cx="12" cy="10.500" r=".7" fill="#402000"/></svg>
    <svg style="left:26px;top:6px" width="18" height="18" viewBox="0 0 18 18"><rect x="6.500" y="1" width="8.500" height="7.500" rx="1" fill="#8ac8f8" stroke="#d8ecfc"/><rect x="1.500" y="5" width="8.500" height="7.500" rx="1" fill="#70b4f0" stroke="#d8ecfc"/><path d="M3 15.500h6M9 11.500h5" stroke="#c8d8f0" stroke-width="2"/></svg>
    <svg style="left:44px;top:6px" width="17" height="17" viewBox="0 0 17 17"><rect x="0" y="1" width="16" height="15" fill="#fff"/><path d="M1 2h4v5l5-5h5l-10 13h-4z" fill="#e01020"/><path d="M8 9l7 6v-4zM8 9l3 6h4z" fill="#000"/></svg>
    <svg style="left:62px;top:5px" width="18" height="18" viewBox="0 0 18 18"><circle cx="9" cy="9" r="7" fill="#e8a050" stroke="#e02010" stroke-width="2.200"/><path d="M7 6h4v6h-4z" fill="#707070"/><path d="M4 4l10 10" stroke="#e02010" stroke-width="2.200"/></svg>
    <div class="t" style="left:86px;top:9px;color:#fff">17:14</div>
  </div>
</div>
</body></html>
